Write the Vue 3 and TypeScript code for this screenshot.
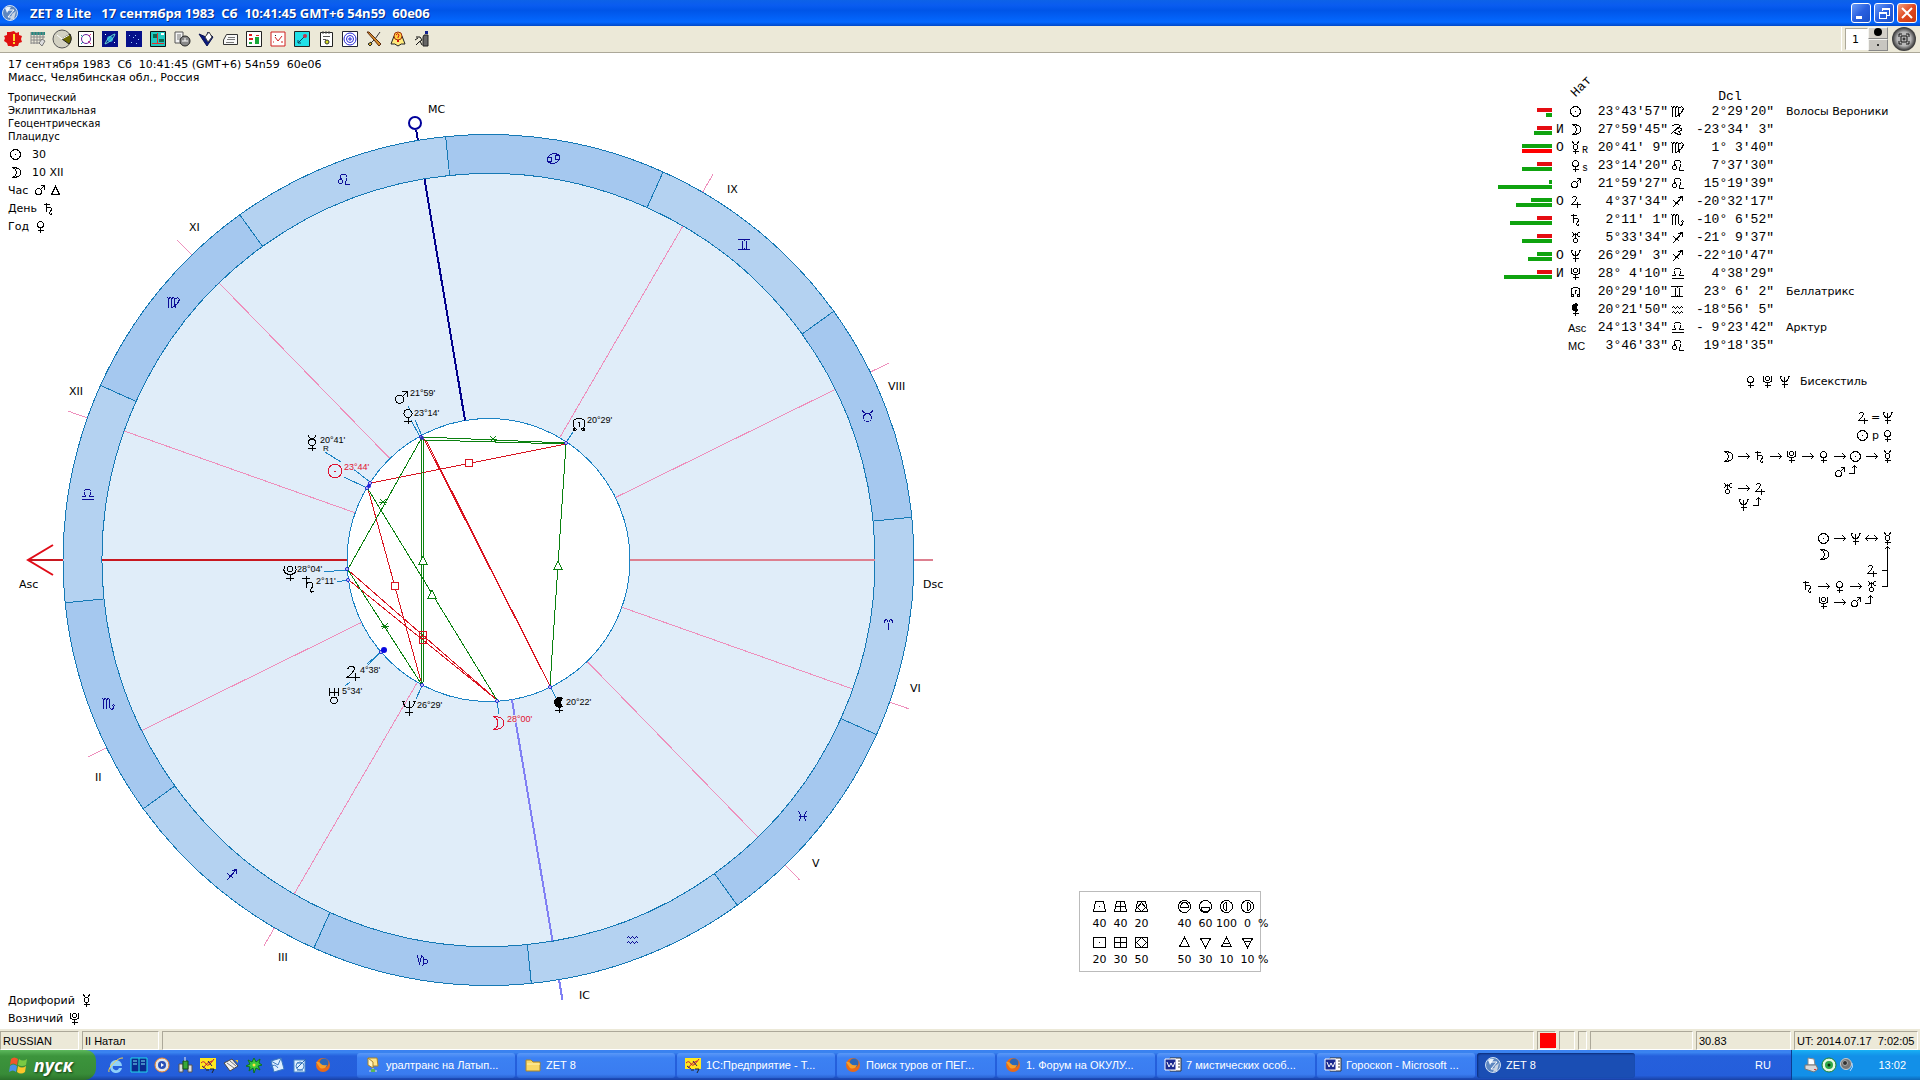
<script setup lang="ts">
import { ref } from 'vue'

type Shape = [d: string, fill: string, stroke?: string]

const ring = (x: number, y: number, r: number): string =>
  `M${x - r} ${y}a${r} ${r} 0 1 0 ${2 * r} 0a${r} ${r} 0 1 0 ${-2 * r} 0`

/* Line drawings of planets, signs and arrows, centred on the origin */
const glyphs: Record<string, string> = {
  sun: ring(0, 0, 5) + 'M-.5 0h1',
  moon: 'M-3 -5C2 -5 5 -3 5 0S2 5 -3 5C2 3 2 -3 -3 -5z',
  mercury: ring(0, -0.5, 2.5) + 'M-3 -6Q-2 -3 0 -3Q2 -3 3 -6M0 2V6M-3 4H3',
  venus: ring(0, -2, 3) + 'M0 1V6M-3 4H3',
  mars: ring(-1, 1, 3) + 'M1 -1L5 -5M1 -5H5V-1',
  jupiter: 'M-4 -3Q-3 -5 -1 -5Q1 -5 1 -3Q0 0 -4 3H5M2 0V6',
  saturn: 'M-5 -4H1M-2 -6V3M-2 0Q0 -2 2 -1Q4 0 2 3Q0 5 2 6L4 5',
  uranus: ring(0, 3, 2) + 'M-4 -5Q-2 -5 -2 -3T-4 -1M4 -5Q2 -5 2 -3T4 -1M-2 -3H2M0 -5V1',
  uranusWide: ring(0, 4, 2.4) + 'M-3 -5V0M3 -5V0M-4 -5H-3M-4 0H-3M3 -5H4M3 0H4M-3 -2H3M0 -5V1',
  neptune: 'M-5 -5H-3M5 -5H3M-4 -5Q-4 0 0 0Q4 0 4 -5M0 -5V6M-3 3H3',
  pluto: ring(0, -3, 2) + 'M-4 -5Q-6 1 0 1Q6 1 4 -5M0 1V6M-3 4H3',
  node: 'M-3 4Q-7 -4 0 -4Q7 -4 3 4' + ring(-3, 4, 1) + ring(3, 4, 1) + 'M-1 -1H1M0 -1V2',
  lilith: 'M0 1V6M-3 4H3',
  aries: 'M-4 -2Q-4 -5 -2 -5Q0 -5 0 5Q0 -5 2 -5Q4 -5 4 -2',
  taurus: ring(0, 2, 4) + 'M-5 -5Q-4 -2 0 -2Q4 -2 5 -5',
  gemini: 'M-6 -5Q0 -4 6 -5M-6 5Q0 4 6 5M-2 -4V4M2 -4V4',
  cancer: ring(-4, 1, 2.4) + ring(4, -1, 2.4) + 'M-6 0Q-4 -5 2 -5L6 -3M6 0Q4 5 -2 5L-6 3',
  leo: ring(-3, 2, 2) + 'M-2 0Q-5 -5 0 -5Q5 -5 3 0Q1 5 3 5H6',
  virgo: 'M-6 -5L-5 -4V5M-5 -4L-3 -5L-2 -4V5M-2 -4L0 -5L1 -4V4L3 5M1 -3L4 -5L6 -3L4 1L-1 5',
  libra: 'M-6 5H6M-6 2H-2Q-6 -5 0 -5Q6 -5 2 2H6',
  scorpio: 'M-6 -5L-5 -4V5M-5 -4L-3 -5L-2 -4V5M-2 -4L0 -5L1 -4V4L3 6L5 5V2M3 3L5 1L7 3',
  sagittarius: 'M-5 6L5 -5M1 -4L5 -5L5 -1M2 -5H5M-4 -1L2 4',
  capricorn: 'M-6 -4L-5 -5L-3 4L-1 -5L1 -3V4L-1 6' + ring(3, 1, 2),
  capricornWide: 'M-5 -4Q-1 -6 3 -4L-6 4M-2 0L2 -2Q6 0 2 2M1 2Q5 5 1 5L-3 3',
  aquarius: 'M-6 -1L-4 -3L-2 -1L0 -3L2 -1L4 -3L6 -1M-6 4L-4 2L-2 4L0 2L2 4L4 2L6 4',
  pisces: 'M-4 -5Q0 0 -4 5M4 -5Q0 0 4 5M-4 0H4',
  triangle: 'M0 -4L4 4H-4z',
  right: 'M-6 0H6M3 -3L6 0L3 3',
  both: 'M-6 0H6M3 -3L6 0L3 3M-3 -3L-6 0L-3 3',
  up: 'M-7 1H-1V-7M-4 -4L-1 -7L2 -4',
}
const crescent = 'M3 -5A4 4 0 1 0 3 1A4 4 0 0 1 3 -5z'

/* Wheel geometry */
const CX = 488.5
const CY = 560
const OUTER = 425.5
const INNER = 386.5
const HUB = 141.5
const ASC = 204.226

const point = (r: number, deg: number): [number, number] => {
  const a = (deg * Math.PI) / 180
  return [CX - r * Math.cos(a), CY + r * Math.sin(a)]
}
const spoke = (r1: number, r2: number, deg: number): string =>
  `M${point(r1, deg).join(' ')}L${point(r2, deg).join(' ')}`

const signNames = ['aries', 'taurus', 'gemini', 'cancer', 'leo', 'virgo', 'libra', 'scorpio', 'sagittarius', 'capricorn', 'aquarius', 'pisces']
const signs = signNames.map((name, i) => {
  const a = i * 30 - ASC
  const b = a + 30
  const [x, y] = point(406, a + 15)
  return {
    name,
    d: `M${point(OUTER, a).join(' ')}A${OUTER} ${OUTER} 0 0 0 ${point(OUTER, b).join(' ')}L${point(INNER, b).join(' ')}A${INNER} ${INNER} 0 0 1 ${point(INNER, a).join(' ')}z`,
    dark: i % 2 === 1,
    at: `translate(${Math.round(x) - 0.5} ${Math.round(y) - 0.5})`,
  }
})

const cusps = [-45.8, -19.5, 26.2, 59.8].flatMap((a) => [a, a + 180])
const MC = -80.46

const houses: [string, number, number][] = [
  ['MC', 428, 113], ['XI', 189, 231], ['XII', 69, 395], ['Asc', 19, 588], ['II', 95, 781], ['III', 278, 961],
  ['IC', 579, 999], ['V', 812, 867], ['VI', 910, 692], ['Dsc', 923, 588], ['VIII', 888, 390], ['IX', 727, 193],
]

interface Body { g: string; x: number; y: number; label: string; dx: number; dy: number; red?: boolean }
const bodies: Body[] = [
  { g: 'mars', x: 401, y: 398, label: '21°59\'', dx: 9, dy: -2 },
  { g: 'venus', x: 408, y: 416, label: '23°14\'', dx: 6, dy: 0 },
  { g: 'mercury', x: 312, y: 443, label: '20°41\'', dx: 8, dy: 0 },
  { g: 'sun', x: 335, y: 471, label: '23°44\'', dx: 9, dy: -1, red: true },
  { g: 'pluto', x: 290, y: 573, label: '28°04\'', dx: 7, dy: -1 },
  { g: 'saturn', x: 309, y: 584, label: '2°11\'', dx: 7, dy: 0 },
  { g: 'jupiter', x: 353, y: 673, label: '4°38\'', dx: 7, dy: 0 },
  { g: 'uranusWide', x: 334, y: 695, label: '5°34\'', dx: 8, dy: -1 },
  { g: 'neptune', x: 409, y: 708, label: '26°29\'', dx: 8, dy: 0 },
  { g: 'moon', x: 497, y: 723, label: '28°00\'', dx: 10, dy: -1, red: true },
  { g: 'lilith', x: 559, y: 705, label: '20°22\'', dx: 7, dy: 0 },
  { g: 'node', x: 579, y: 424, label: '20°29\'', dx: 8, dy: -1 },
]
const leaders =
  'M408 406L411 412M415 420L422 436M411 420L420 437M325 452L341 462M352 468L370 482M344 477L367 488M324 571H334L347 570M337 582L348 580M367 664L382 651M345 686L350 682M365 668L380 653M416 699L422 686M499 714L497 702M556 698L551 688M573 432L567 441'
const dots: [number, number][] = [[421, 437], [370, 483], [367, 488], [347, 569], [348, 580], [381, 652], [422, 685], [497, 701], [550, 687], [566, 443]]
const greenLines = 'M423 437L566 443M424 440L566 444M421 439L348 569M368 489L497 700M421 439L422 685M424 439L423 685M566 444L550 686M348 570L422 685'
const redLines = 'M371 483L566 444M368 489L422 685M424 439L550 686M426 440L550 686M348 570L497 700M350 581L497 700'
const stars: [number, number][] = [[493, 439], [383, 502], [385, 626]]
const boxes: [number, number][] = [[469, 463], [395, 586], [423, 640], [423, 635]]
const trines: [number, number][] = [[423, 560], [432, 594], [558, 565]]

interface Row { bars?: [number, number]; tone?: string; mark?: string; g?: string; name?: string; sub?: string; lon: string; sign: string; dcl: string; star?: string }
const rows: Row[] = [
  { bars: [15, 6], tone: 'rg', g: 'sun', lon: '23°43\'57"', sign: 'virgo', dcl: '2°29\'20"', star: 'Волосы Вероники' },
  { bars: [15, 18], tone: 'rg', mark: 'И', g: 'moon', lon: '27°59\'45"', sign: 'capricornWide', dcl: '-23°34\' 3"' },
  { bars: [30, 30], tone: 'gr', mark: 'О', g: 'mercury', sub: 'R', lon: '20°41\' 9"', sign: 'virgo', dcl: '1° 3\'40"' },
  { bars: [15, 30], tone: 'rg', g: 'venus', sub: 's', lon: '23°14\'20"', sign: 'leo', dcl: '7°37\'30"' },
  { bars: [3, 54], tone: 'gg', g: 'mars', lon: '21°59\'27"', sign: 'leo', dcl: '15°19\'39"' },
  { bars: [21, 36], tone: 'gg', mark: 'О', g: 'jupiter', lon: '4°37\'34"', sign: 'sagittarius', dcl: '-20°32\'17"' },
  { bars: [15, 42], tone: 'rg', g: 'saturn', lon: '2°11\' 1"', sign: 'scorpio', dcl: '-10° 6\'52"' },
  { bars: [15, 30], tone: 'rg', g: 'uranus', lon: '5°33\'34"', sign: 'sagittarius', dcl: '-21° 9\'37"' },
  { bars: [15, 24], tone: 'gg', mark: 'О', g: 'neptune', lon: '26°29\' 3"', sign: 'sagittarius', dcl: '-22°10\'47"' },
  { bars: [15, 48], tone: 'rg', mark: 'И', g: 'pluto', lon: '28° 4\'10"', sign: 'libra', dcl: '4°38\'29"' },
  { g: 'node', lon: '20°29\'10"', sign: 'gemini', dcl: '23° 6\' 2"', star: 'Беллатрикс' },
  { g: 'lilith', lon: '20°21\'50"', sign: 'aquarius', dcl: '-18°56\' 5"' },
  { name: 'Asc', lon: '24°13\'34"', sign: 'libra', dcl: '- 9°23\'42"', star: 'Арктур' },
  { name: 'MC', lon: '3°46\'33"', sign: 'leo', dcl: '19°18\'35"' },
]

/* Dispositor chains on a 16-unit grid: glyph, column, row */
const chain: [string, number, number][] = [
  ['moon', 0, 0], ['right', 1, 0], ['saturn', 2, 0], ['right', 3, 0], ['pluto', 4, 0], ['right', 5, 0], ['venus', 6, 0],
  ['right', 7, 0], ['sun', 8, 0], ['right', 9, 0], ['mercury', 10, 0], ['mars', 7, 1], ['up', 8, 1],
  ['uranus', 0, 2], ['right', 1, 2], ['jupiter', 2, 2], ['neptune', 1, 3], ['up', 2, 3],
]
const chainTwo: [string, number, number][] = [
  ['sun', 6, 0], ['right', 7, 0], ['neptune', 8, 0], ['both', 9, 0], ['mercury', 10, 0], ['moon', 6, 1], ['jupiter', 9, 2],
  ['saturn', 5, 3], ['right', 6, 3], ['venus', 7, 3], ['right', 8, 3], ['uranus', 9, 3],
  ['pluto', 6, 4], ['right', 7, 4], ['mars', 8, 4], ['up', 9, 4],
]

const legend: [string, string][][] = [
  [
    ['M-4 -5H4L6 5H-6zM-.5 0h1', '40'], ['M-4 -5H4L6 5H-6zM-5 0H5M0 -5V5', '40'], ['M-4 -5H4L6 5H-6zM0 -4L4 1L0 5L-4 1z', '20'], ['', ''],
    [ring(0, 0, 6) + 'M-4 1H4Q4 -4 0 -4T-4 1z', '40'], [ring(0, 0, 6) + 'M-4 1H4Q4 5 0 5T-4 1z', '60'],
    [ring(0, 0, 6) + 'M0 -4V4Q-3 4 -3 0T0 -4z', '100'], [ring(0, 0, 6) + 'M0 -4V4Q3 4 3 0T0 -4z', '0'], ['', '%'],
  ],
  [
    ['M-6 -5H6V5H-6zM-.5 0h1', '20'], ['M-6 -5H6V5H-6zM-6 0H6M0 -5V5', '30'], ['M-6 -5H6V5H-6zM0 -5L5 0L0 5L-5 0z', '50'], ['', ''],
    ['M0 -5L5 4H-5z', '50'], ['M0 5L5 -4H-5z', '30'], ['M0 -5L5 4H-5zM-3 1H3', '10'], ['M0 5L5 -4H-5zM-3 -1H3', '10'], ['', '%'],
  ],
]

const tools: { name: string; shapes: Shape[] }[] = [
  { name: 'Событие', shapes: [['M8 0l2 2 3-1 0 3 3 1-1 3 1 3-3 1-1 3-3 0-2 1-2-1-3 0-1-3-3-2 1-3-1-2 3-1 0-3 3 0z', '#e01010'], ['M7 3h2v7H7zM7 11h2v2H7z', '#ffe030']] },
  { name: 'Эфемериды', shapes: [['M1 1h14v3H1z', '#208a80'], ['M1 1V13M4 1V13M7 1V13M10 1V10M13 1V8M1 6H15M1 9H12M1 12H9', 'none', '#888'], ['M9 12l3-4 3 2-3 5z', '#ddd', '#777']] },
  { name: 'Время', shapes: [[ring(8, 8, 9), '#d3d1c2', '#555'], ['M8 8L16 3A9 9 0 0 1 15 13z', '#6b6800', '#222'], ['M8 8L3 4M8 8L15 4', 'none', '#fff']] },
  { name: 'Космограмма', shapes: [['M.5 .5H15.500V15.500H.5z', '#fff', '#111'], [ring(8, 8, 4.5), 'none', '#6a1fa0'], ['M10 10L13 13M11 5L13 3', 'none', '#e03a7a'], ['M3 4L5 6M3 13L5 11', 'none', '#1a8a9a']] },
  { name: 'Планеты', shapes: [['M0 0H16V16H0z', '#06108a'], [ring(8, 8, 3), '#28a8d8'], ['M3 13Q6 5 13 3Q11 10 3 13', 'none', '#68d8d0'], ['M12 11h1v1h-1zM3 3h1v1H3z', '#fff']] },
  { name: 'Звёздное небо', shapes: [['M0 0H16V16H0z', '#06108a'], ['M3 4h1v1H3zM7 6h1v1H7zM9 4h1v1H9zM12 8h1v1h-1zM5 11h1v1H5zM10 12h1v1h-1z', '#9fd0ff']] },
  { name: 'Карта мира', shapes: [['M.5 .5H15.500V15.500H.5z', '#20c8c0', '#111'], ['M3 3h5v4H3zM9 8h5v3H9z', '#0a6a50'], ['M2 12.500H14M7.500 2V12', 'none', '#e03030'], ['M11 2h3v2h-3z', '#fff']] },
  { name: 'База данных', shapes: [['M1 1H9V12H1z', '#f4f4f4', '#555'], ['M3 4H7M3 6H7M3 8H7', 'none', '#777'], [ring(11, 10, 5), '#888', '#222'], ['M8 10h6M11 7v3', 'none', '#fff']] },
  { name: 'Книга', shapes: [['M1 3L9 15 15 6 10 1 8 6z', '#0a1a80', '#081050'], ['M7 6L11 1 14 6 10 11z', '#fff', '#444']] },
  { name: 'Текст', shapes: [['M4.500 3.500H15.500V13.500H1.500V9z', '#f8f8f8', '#333'], ['M6 6.500H13M5 8.500H13M4 11.500H12', 'none', '#777']] },
  { name: 'Таблица', shapes: [['M.5 .5H15.500V15.500H.5z', '#fff', '#222'], ['M3 3h3v2H3zM3 7h4v2H3zM10 4h3v1h-3z', '#e02020'], ['M9 6h4v7H9zM3 11h3v2H3z', '#18a838']] },
  { name: 'График', shapes: [['M1 1H15V15H1z', '#fff', '#d02020'], ['M5 6L8 10 12 5M11 11h2M3 11h1', 'none', '#d02020'], ['M5 4h1v1H5z', '#222']] },
  { name: 'Аспекты', shapes: [['M.5 .5H15.500V15.500H.5z', '#20e0e8', '#222'], ['M4 12L11 5M4 9V12H7', 'none', '#0a4060'], [ring(11, 5, 2), '#c03050']] },
  { name: 'Заметки', shapes: [['M2.500 1.500H14.500V15.500H2.500z', '#fff', '#222'], ['M5 0v3M8 0v3M11 0v3M5 5.500H12M5 8.500H8', 'none', '#555'], [ring(9, 11, 2), '#d8e020', '#333']] },
  { name: 'Система', shapes: [['M.5 .5H15.500V15.500H.5z', '#fff', '#223'], [ring(8, 8, 6) + ring(8, 8, 3.5), 'none', '#2828d8'], ['M8 6v4M6 8h4', 'none', '#2828d8']] },
  { name: 'Настройки', shapes: [['M14 1L9 8 3 14', 'none', '#333'], ['M1 1L3 1 10 8 15 13 13 15 8 9z', '#d8902a', '#5a2a10'], ['M2 13l3-2 1 2-2 2z', '#e0b020', '#222']] },
  { name: 'Справка', shapes: [['M1 13L4 5H12L15 13Q11 12 8 15Q5 12 1 13z', '#ffe97a', '#222'], [ring(8, 5, 4), '#ffd040', '#a03010'], ['M6 4Q8 1 9 4Q9 5 8 6V7', 'none', '#d01010'], ['M7 9h2v2H7z', '#d01010']] },
  { name: 'Выход', shapes: [['M10 4H14V15H9V6z', '#666', '#222'], ['M11 0h3v3h-3z', '#102090'], ['M2 6H6L8 9 5 11 2 14M6 10L8 14M1 9L4 7', 'none', '#111']] },
]

const launch: { name: string; shapes: Shape[] }[] = [
  { name: 'Internet Explorer', shapes: [['M2 9a6 6 0 1 1 12 0H5a3 3 0 0 0 6 2h3a6 6 0 0 1-12-2z', '#8fd0fa'], ['M1 15C-1 11 10 0 15 1', 'none', '#f5d14a']] },
  { name: 'Far', shapes: [['M0 1H16V15H0z', '#0a2a90', '#20d8e8'], ['M8 1V15', 'none', '#20d8e8'], ['M2 4H6M2 7H6M10 4H14M10 7H14', 'none', '#7fe8f8']] },
  { name: 'Media Player', shapes: [[ring(8, 8, 7), '#dfe6ee', '#f08020'], [ring(8, 8, 4), '#2a50b8'], ['M7 6L10 8 7 10z', '#fff']] },
  { name: 'Сеть', shapes: [['M2 7H6V15H2zM11 8H15V15H11z', '#ddd', '#555'], ['M6 4H11V12H6z', '#38a838', '#145014'], ['M8 0V4', 'none', '#eee']] },
  { name: '1С', shapes: [['M0 1H16V12H0z', '#ffe820'], ['M1 6Q4 3 6 7T14 2M3 11Q7 5 12 4', 'none', '#c01838'], ['M2 9L6 12M8 4L12 9', 'none', '#2a1a60'], ['M6 13H9M10 12H14L12 16', 'none', '#222']] },
  { name: 'Архив', shapes: [['M1 6L9 2 15 9 7 14z', '#f0f0f0', '#444'], ['M4 6L11 11M7 4L13 9', 'none', '#777'], ['M12 3h3v3z', '#e8c020']] },
  { name: 'ICQ', shapes: [['M8 1l2 4 4-3-1 4 3 2-4 1 2 4-4-2-2 5-1-5-4 3 1-4-4-1 4-2-2-4 4 2z', '#3cc83c', '#0c7020'], [ring(8, 8, 1.5), '#ffe040']] },
  { name: 'Почта', shapes: [['M2 4L12 1 15 12 5 15z', '#dceeff', '#3a78c0'], ['M2 4L9 8 12 1M1 10Q6 6 9 11', 'none', '#3a78c0']] },
  { name: 'Рабочий стол', shapes: [['M2 3H13V15H2z', '#dff0ff', '#4a88c8'], ['M5 11L14 2M5 6H9M5 13H11', 'none', '#2868b0'], [ring(8, 9, 4), 'none', '#4a88c8']] },
  { name: 'Firefox', shapes: [[ring(8, 8, 7), '#e86a18'], [ring(9, 6, 4.5), '#2a68b8'], ['M1 5Q4 4 6 7Q8 9 12 8Q10 13 5 11z', '#f8a028']] },
]

const fox = launch[9].shapes
const word: Shape[] = [['M5 1H16V14H5z', '#fff', '#333'], ['M0 2H11V13H0z', '#1a2a90', '#fff'], ['M2 5L4 10 6 6 8 10 10 5', 'none', '#fff'], ['M13 4h2M13 7h2M13 10h2', 'none', '#444']]
const zet: Shape[] = [[ring(8, 8, 7.5), '#5c86c0', '#cfe0f4'], ['M3 3Q6 1 9 2L5 8z', '#e8f2fc'], ['M5 5H12L6 12H12', 'none', '#fff'], ['M10 9L14 6 12 14 8 15z', '#c9d4e2']]
const tasks: { name: string; shapes: Shape[]; active?: boolean }[] = [
  { name: 'уралтранс на Латып...', shapes: [['M3 1H12L13 9H5z', '#ffe58a', '#a8842a'], ['M3 1L8 5V11L3 8z', '#fff3c0', '#a8842a'], ['M4 14H12M8 11V14', 'none', '#ddd'], ['M6 12h4v3H6z', '#58b858']] },
  { name: 'ZET 8', shapes: [['M1 3H6L8 5H15V14H1z', '#f8d868', '#a8842a'], ['M2 7H15', 'none', '#fff3b0']] },
  { name: '1С:Предприятие - Т...', shapes: launch[4].shapes },
  { name: 'Поиск туров от ПЕГ...', shapes: fox },
  { name: '1. Форум на ОКУЛУ...', shapes: fox },
  { name: '7 мистических особ...', shapes: word },
  { name: 'Гороскоп - Microsoft ...', shapes: word },
  { name: 'ZET 8', shapes: zet, active: true },
]
const tray: Shape[][] = [
  [['M5 1L11 2 12 8H5z', '#fff', '#888'], ['M2 8H13L15 12 11 15 2 12z', '#d8d8d8', '#777'], ['M11 12h2v1h-2z', '#e03030']],
  [[ring(8, 8, 7), '#e8f8e0', '#188030'], [ring(8, 8, 4), '#30a848'], [ring(8, 8, 1.5), '#0a3010']],
  [[ring(7, 7, 5.5), '#777', '#ccc'], [ring(6, 6, 2.5), '#333', '#aaa'], ['M13 6Q15 10 11 14', 'none', '#bcd8f8']],
]

const page = ref('1')
</script>

<template>
  <div class="app">
    <header class="title">
      <svg class="icon" viewBox="0 0 16 16"><path v-for="(s, i) in zet" :key="i" :d="s[0]" :fill="s[1]" :stroke="s[2]" /></svg>
      <h1>{{ 'ZET 8 Lite   17 сентября 1983  Сб  10:41:45 GMT+6 54n59  60e06' }}</h1>
      <button class="win" aria-label="Свернуть"><svg viewBox="0 0 20 20"><path d="M5 14H11" stroke-width="3" /></svg></button>
      <button class="win" aria-label="Восстановить"><svg viewBox="0 0 20 20"><path d="M8 8V5H15V12H12M5 9H12V15H5zM5 10H12M8 6H15" /></svg></button>
      <button class="win close" aria-label="Закрыть"><svg viewBox="0 0 20 20"><path d="M5 5L15 15M15 5L5 15" stroke-width="2" /></svg></button>
    </header>

    <nav class="tools">
      <button v-for="t in tools" :key="t.name" class="tool" :aria-label="t.name">
        <svg class="icon" viewBox="0 0 16 16"><path v-for="(s, i) in t.shapes" :key="i" :d="s[0]" :fill="s[1]" :stroke="s[2]" /></svg>
      </button>
      <div class="pager">
        <input v-model="page" class="page" aria-label="Номер карты">
        <div class="spin">
          <button aria-label="Больше"><svg viewBox="0 0 20 12"><circle cx="10" cy="5" r="4" /></svg></button>
          <button aria-label="Меньше"><svg viewBox="0 0 20 12"><circle cx="10" cy="6" r="1" /></svg></button>
        </div>
        <button class="round" aria-label="Полный экран">
          <svg viewBox="0 0 24 24"><path d="M7 10V7H10M14 7H17V10M17 14V17H14M10 17H7V14M9 9H15V15H9zM12 10.500V13.500M10.500 12H13.500" /></svg>
        </button>
      </div>
    </nav>

    <main class="sheet">
      <section class="wheel">
        <svg class="chart" viewBox="0 53 960 976">
          <circle :cx="CX" :cy="CY" :r="INNER" fill="#e0edf9" />
          <g class="line">
            <path v-for="a in cusps" :key="a" :d="spoke(HUB, INNER, a) + spoke(OUTER, 446, a)" stroke="#ee8fbc" />
            <path v-for="s in signs" :key="s.name" :d="s.d" :fill="s.dark ? '#a5c8ef' : '#b4d2f1'" stroke="#1579b5" />
            <circle :cx="CX" :cy="CY" :r="HUB" fill="#fff" stroke="#1b83c4" />
            <path d="M102 560H347M28 560H63" stroke="#c81820" stroke-width="2" />
            <path d="M630 560H875M914 560H933" stroke="#dd8090" stroke-width="2" />
            <path :d="spoke(HUB, INNER, MC) + spoke(OUTER, 436, MC)" stroke="#00008b" stroke-width="2" />
            <path :d="spoke(HUB, INNER, MC + 180) + spoke(OUTER, 446, MC + 180)" stroke="#8080f4" stroke-width="2" />
            <path :d="leaders" stroke="#1b83c4" />
            <path :d="redLines" stroke="#d81420" />
            <path :d="greenLines" stroke="#0a800f" />
          </g>
          <path d="M53 545L28 560L53 575" fill="none" stroke="#e00c18" stroke-width="2" />
          <circle cx="415" cy="123" r="6" fill="#fff" stroke="#00009b" stroke-width="2" />
          <g class="line" stroke="#0a800f">
            <path v-for="([x, y], i) in stars" :key="i" :d="`M${x - 4} ${y}H${x + 4}M${x - 3} ${y - 3}L${x + 3} ${y + 3}M${x + 3} ${y - 3}L${x - 3} ${y + 3}`" />
            <path v-for="([x, y], i) in trines" :key="i" :d="`M${x} ${y - 4}L${x + 4} ${y + 4}H${x - 4}z`" fill="#fff" />
          </g>
          <g class="line" stroke="#d81420">
            <path v-for="([x, y], i) in boxes" :key="i" :d="`M${x - 4} ${y - 4}h7v7h-7z`" :fill="i < 2 ? '#fff' : 'none'" />
          </g>
          <circle v-for="([x, y], i) in dots" :key="i" :cx="x" :cy="y" r="1.500" fill="#fff" stroke="#1010d0" />
          <circle cx="384" cy="650" r="3" fill="#0808e0" />
          <circle cx="422" cy="438" r="2" fill="#3030b0" />
          <circle cx="369" cy="486" r="2" fill="#2020d8" />
          <g class="sign"><path v-for="s in signs" :key="s.name" :d="glyphs[s.name]" :transform="s.at" /></g>
          <g v-for="b in bodies" :key="b.g" :class="['body', { red: b.red }]">
            <path :d="glyphs[b.g]" :transform="`translate(${b.x} ${b.y}) scale(1.350)`" />
            <path v-if="b.g === 'lilith'" :d="crescent" class="solid" :transform="`translate(${b.x} ${b.y}) scale(1.350)`" />
            <text :x="b.x + b.dx" :y="b.y + b.dy">{{ b.label }}</text>
          </g>
          <text class="retro" x="323" y="451">R</text>
          <g class="house"><text v-for="[n, x, y] in houses" :key="n" :x="x" :y="y">{{ n }}</text></g>
        </svg>

        <div class="birth">
          <p>{{ '17 сентября 1983  Сб  10:41:45 (GMT+6) 54n59  60e06' }}</p>
          <p>Миасс, Челябинская обл., Россия</p>
          <ul class="system">
            <li>Тропический</li>
            <li>Эклиптикальная</li>
            <li>Геоцентрическая</li>
            <li>Плацидус</li>
          </ul>
          <ul class="facts">
            <li><svg class="glyph" viewBox="-7.500 -7.500 16 16"><path :d="glyphs.sun" /></svg><span class="num">30</span></li>
            <li><svg class="glyph" viewBox="-7.500 -7.500 16 16"><path :d="glyphs.moon" /></svg><span class="num">10 XII</span></li>
            <li>Час<svg class="glyph after" viewBox="-7.500 -7.500 16 16"><path :d="glyphs.mars" /></svg><svg class="glyph" viewBox="-7.500 -7.500 16 16"><path :d="glyphs.triangle" /></svg></li>
            <li>День<svg class="glyph after" viewBox="-7.500 -7.500 16 16"><path :d="glyphs.saturn" /></svg></li>
            <li>Год<svg class="glyph after" viewBox="-7.500 -7.500 16 16"><path :d="glyphs.venus" /></svg></li>
          </ul>
        </div>

        <ul class="notes facts">
          <li>Дорифорий<svg class="glyph after" viewBox="-7.500 -7.500 16 16"><path :d="glyphs.mercury" /></svg></li>
          <li>Возничий<svg class="glyph after" viewBox="-7.500 -7.500 16 16"><path :d="glyphs.pluto" /></svg></li>
        </ul>
      </section>

      <section class="side">
        <div class="legend">
          <div v-for="(line, i) in legend" :key="i" class="shares">
            <div v-for="([d, t], j) in line" :key="j" :class="{ space: j === 3, unit: j === 8 }">
              <svg class="glyph" viewBox="-7.500 -7.500 16 16"><path :d="d" /></svg>
              <span>{{ t }}</span>
            </div>
          </div>
        </div>

        <div class="data">
          <table>
            <colgroup><col class="c1"><col class="c2"><col class="c3"><col class="c4"><col class="c5"><col class="c6"><col></colgroup>
            <thead>
              <tr><th></th><th></th><th><span class="tilt">Нат</span></th><th></th><th></th><th>Dcl</th><th></th></tr>
            </thead>
            <tbody>
              <tr v-for="(r, i) in rows" :key="i">
                <td>
                  <div v-if="r.bars" :class="['bars', r.tone]"><i :style="{ width: r.bars[0] + 'px' }" /><i :style="{ width: r.bars[1] + 'px' }" /></div>
                </td>
                <td class="mark">{{ r.mark }}</td>
                <td class="planet">
                  <div>
                    <svg v-if="r.g" class="glyph" viewBox="-7.500 -7.500 16 16"><path :d="glyphs[r.g]" /><path v-if="r.g === 'lilith'" :d="crescent" class="solid" /></svg>
                    <span v-else class="angle">{{ r.name }}</span>
                    <sub>{{ r.sub }}</sub>
                  </div>
                </td>
                <td class="value">{{ r.lon }}</td>
                <td class="zodiac"><svg class="glyph" viewBox="-7.500 -7.500 16 16"><path :d="glyphs[r.sign]" /></svg></td>
                <td class="value">{{ r.dcl }}</td>
                <td class="star">{{ r.star }}</td>
              </tr>
            </tbody>
          </table>

          <p class="figure">
            <svg v-for="g in ['venus', 'pluto', 'neptune']" :key="g" class="glyph" viewBox="-7.500 -7.500 16 16"><path :d="glyphs[g]" /></svg>
            <span>Бисекстиль</span>
          </p>
          <p class="pair first">
            <svg class="glyph" viewBox="-7.500 -7.500 16 16"><path :d="glyphs.jupiter" /></svg><span>=</span><svg class="glyph" viewBox="-7.500 -7.500 16 16"><path :d="glyphs.neptune" /></svg>
          </p>
          <p class="pair">
            <svg class="glyph" viewBox="-7.500 -7.500 16 16"><path :d="glyphs.sun" /></svg><span>p</span><svg class="glyph" viewBox="-7.500 -7.500 16 16"><path :d="glyphs.venus" /></svg>
          </p>
          <svg class="chain" viewBox="-7.500 -7.500 176 166">
            <path v-for="([g, c, r], i) in chain" :key="i" :d="glyphs[g]" :transform="`translate(${c * 16} ${r * 16})`" />
            <path v-for="([g, c, r], i) in chainTwo" :key="'b' + i" :d="glyphs[g]" :transform="`translate(${c * 16} ${r * 16 + 82})`" />
            <path d="M154 130H160V90M157 93L160 90L163 93M154 114H160" />
          </svg>
        </div>
      </section>
    </main>

    <footer class="status">
      <span class="s1">RUSSIAN</span><span class="s2">II Натал</span><span class="s3"></span><span class="s4"><i></i></span><span class="s5"></span><span class="s6"></span><span class="s7"></span><span class="s8">30.83</span><span class="s9">{{ 'UT: 2014.07.17  7:02:05' }}</span>
    </footer>

    <div class="taskbar">
      <button class="start">
        <svg viewBox="0 0 20 20"><path d="M2 4Q5 1 9 4L8 10Q4 7 1 10z" fill="#f0562a" /><path d="M10 4Q14 7 18 4L17 10Q13 12 9 10z" fill="#7ac943" /><path d="M1 11Q4 8 8 11L7 17Q4 14 0 17z" fill="#4a90e8" /><path d="M9 11Q13 14 17 11L16 17Q12 20 8 17z" fill="#fcc62a" /></svg>
        пуск
      </button>
      <div class="quick">
        <button v-for="q in launch" :key="q.name" :aria-label="q.name">
          <svg class="icon" viewBox="0 0 16 16"><path v-for="(s, i) in q.shapes" :key="i" :d="s[0]" :fill="s[1]" :stroke="s[2]" /></svg>
        </button>
      </div>
      <div class="tasks">
        <button v-for="(t, i) in tasks" :key="i" :class="['task', { active: t.active }]">
          <svg class="icon" viewBox="0 0 16 16"><path v-for="(s, k) in t.shapes" :key="k" :d="s[0]" :fill="s[1]" :stroke="s[2]" /></svg>
          <span>{{ t.name }}</span>
        </button>
      </div>
      <button class="lang">RU</button>
      <div class="tray">
        <svg v-for="(t, i) in tray" :key="i" class="icon" viewBox="0 0 16 16"><path v-for="(s, k) in t" :key="k" :d="s[0]" :fill="s[1]" :stroke="s[2]" /></svg>
        <time>13:02</time>
      </div>
    </div>
  </div>
</template>

<style>
body { margin: 0; background: #fff; }
</style>

<style scoped>
.app { display: flex; flex-direction: column; min-height: 100vh; font: 11px/18px "DejaVu Sans", sans-serif; color: #000; }
.app * { box-sizing: border-box; }
button { padding: 0; border: 0; background: none; font: inherit; color: inherit; display: flex; align-items: center; justify-content: center; }
p, ul, h1 { margin: 0; padding: 0; list-style: none; white-space: pre; }
svg { display: block; flex: none; }
.icon { width: 16px; height: 16px; overflow: visible; }
.glyph { width: 16px; height: 16px; fill: none; stroke: #000; shape-rendering: crispEdges; overflow: visible; }

.title { display: flex; align-items: center; height: 26px; padding: 0 3px 0 2px; gap: 3px; background: linear-gradient(#0d62e8, #0a5cf0 20%, #0055e8 40%, #0468ff 85%, #0048c8); color: #fff; }
.title h1 { flex: 1; margin-left: 9px; font: bold 13px/22px "Open Sans", sans-serif; text-shadow: 1px 1px #0a2a80; }
.win { width: 20px; height: 20px; border: 1px solid #fff; border-radius: 3px; background: linear-gradient(135deg, #6a9cf8, #2a60e0 50%, #1a50c8); }
.win svg { width: 20px; height: 20px; fill: none; stroke: #fff; shape-rendering: crispEdges; }
.win.close { background: linear-gradient(135deg, #f0a080, #e04820 50%, #c83810); }
.win.close svg { shape-rendering: auto; }

.tools { display: flex; align-items: center; height: 27px; padding: 0 4px 0 2px; background: #ece9d8; border-bottom: 1px solid #aca899; }
.tool { width: 24px; height: 24px; }
.pager { margin-left: auto; display: flex; align-items: center; padding-left: 3px; border-left: 1px solid #fff; }
.page { width: 23px; height: 22px; padding: 0 0 0 6px; border: 1px solid #aca899; border-right-color: #fff; border-bottom-color: #fff; background: #fff; font: 11px "DejaVu Sans", sans-serif; }
.spin button { width: 20px; height: 12px; background: #d4d0c8; border: 1px solid #f4f4f0; border-right-color: #888; border-bottom-color: #888; }
.spin svg { width: 20px; height: 12px; }
.spin button:last-child { background: #c8c6c0; }
.round { width: 24px; height: 24px; margin-left: 4px; border-radius: 12px; background: radial-gradient(#b8b8b8 40%, #444 65%, #222); }
.round svg { width: 24px; height: 24px; fill: none; stroke: #111; }

.sheet { flex: 1; display: flex; background: #fff; }
.wheel { width: 50%; display: grid; }
.wheel > * { grid-area: 1 / 1; }
.chart { width: 100%; fill: #000; }
.line { fill: none; shape-rendering: crispEdges; }
.sign { fill: none; stroke: #0c0c96; shape-rendering: crispEdges; }
.body path { fill: none; stroke: #000; shape-rendering: crispEdges; vector-effect: non-scaling-stroke; }
.body text { font: 9px "Liberation Sans", sans-serif; paint-order: stroke; stroke: #e0edf9; stroke-width: 2px; }
.body.red path { stroke: #e01030; }
.body.red text { fill: #e01030; }
.glyph path.solid, .body path.solid { fill: #000; stroke: none; }
.retro { font: 8px "Liberation Sans", sans-serif; }
.house text { font: 11px "DejaVu Sans", sans-serif; }

.birth { align-self: start; justify-self: start; padding: 5px 0 0 8px; line-height: 13px; }
.system { margin-top: 7px; font-size: 10px; }
.facts { line-height: 18px; }
.birth .facts { margin-top: 3px; }
.facts li { display: flex; align-items: center; height: 18px; }
.num { margin-left: 8px; }
.after { margin-left: 4px; }
.notes { align-self: end; justify-self: start; padding: 0 0 1px 8px; }

.side { flex: 1; display: flex; justify-content: space-between; }
.legend { align-self: flex-end; width: 182px; height: 81px; margin: 0 0 57px 119px; padding: 7px 0 0 9px; border: 1px solid #bbb; white-space: nowrap; }
.shares { display: flex; height: 36px; }
.shares > div { flex: none; width: 21px; display: flex; flex-direction: column; align-items: center; }
.shares > .space { width: 22px; }
.shares > .unit { align-items: flex-start; }
.shares span { line-height: 18px; }

.data { width: 440px; }
table { width: 440px; table-layout: fixed; border-collapse: collapse; font: 13px/18px "Liberation Mono", monospace; }
.c1 { width: 72px; }
.c2 { width: 16px; }
.c3 { width: 28px; }
.c4 { width: 72px; }
.c5 { width: 18px; }
.c6 { width: 88px; }
th { height: 50px; padding: 0; vertical-align: bottom; font-weight: normal; line-height: 12px; }
.tilt { display: inline-block; margin-bottom: 10px; transform: rotate(-45deg); }
td { height: 18px; padding: 0; white-space: pre; }
.bars { display: flex; flex-direction: column; align-items: flex-end; gap: 1px; }
.bars i { height: 4px; background: #0fa30f; }
.rg i:first-child { background: #e50d12; }
.gr i:last-child { background: #f00; }
.mark { text-align: center; }
.planet div { display: flex; align-items: center; height: 18px; }
.planet sub { font-size: 10px; line-height: 10px; padding-top: 6px; margin-left: -2px; vertical-align: baseline; }
.angle { font: 11px/18px "Liberation Sans", sans-serif; }
.value { text-align: right; }
td.zodiac { padding-left: 2px; }
td.star { padding-left: 12px; font: 11px/16px "DejaVu Sans", sans-serif; }
.figure { display: flex; align-items: center; gap: 1px; height: 18px; margin: 18px 0 0 263px; }
.figure span { margin-left: 6px; }
.pair { display: flex; align-items: center; justify-content: flex-end; height: 18px; padding-right: 24px; }
.pair span { width: 9px; text-align: center; }
.pair.first { margin-top: 18px; }
.chain { width: 176px; height: 166px; margin: 4px 24px 0 auto; fill: none; stroke: #000; shape-rendering: crispEdges; }

.status { display: flex; height: 21px; padding: 2px 2px 0 0; gap: 3px; background: #ece9d8; font: 11px/18px "Liberation Sans", sans-serif; white-space: pre; }
.status span { border: 1px solid #aca899; border-right-color: #fff; border-bottom-color: #fff; padding-left: 2px; height: 19px; }
.s1 { width: 79px; }
.s2 { width: 77px; }
.s3 { flex: 1; }
.s4 { width: 19px; }
.s4 i { display: block; width: 16px; height: 15px; margin-top: 1px; background: #f00; }
.s5 { width: 16px; }
.s6 { width: 9px; }
.s7 { width: 103px; }
.s8 { width: 95px; }
.s9 { width: 124px; }

.taskbar { display: flex; height: 30px; background: linear-gradient(#3a80f0, #3a84f0 8%, #2560dc 20%, #245edb 85%, #1941a5); color: #fff; font: 11px/18px "Liberation Sans", sans-serif; }
.start { width: 96px; padding-right: 14px; gap: 5px; border-radius: 0 10px 12px 0; background: linear-gradient(#5cb85c, #3c943c 20%, #388c38 80%, #2a702a); font: italic bold 18px/26px "Open Sans", sans-serif; text-shadow: 1px 1px 2px #143c14; }
.start svg { width: 20px; height: 20px; }
.quick { display: flex; margin-left: 8px; }
.quick button { width: 23px; }
.tasks { flex: 1; display: flex; gap: 2px; margin-left: 23px; align-items: center; min-width: 0; }
.task { width: 158px; height: 25px; padding-left: 8px; gap: 5px; justify-content: flex-start; border-radius: 3px; background: linear-gradient(#5a98f8, #3c81f3 20%, #3a7cf0 85%, #2a62d0); white-space: nowrap; }
.task.active { background: #1a4eb4; box-shadow: inset 1px 1px 2px #0c2c78; }
.lang { width: 34px; }
.tray { display: flex; align-items: center; width: 129px; margin-left: 11px; padding-left: 11px; gap: 2px; background: linear-gradient(#18b0f4, #1290e8 20%, #1290e8 85%, #0c68b8); border-left: 1px solid #0c3c90; }
.tray time { margin-left: auto; padding-right: 14px; }
</style>
